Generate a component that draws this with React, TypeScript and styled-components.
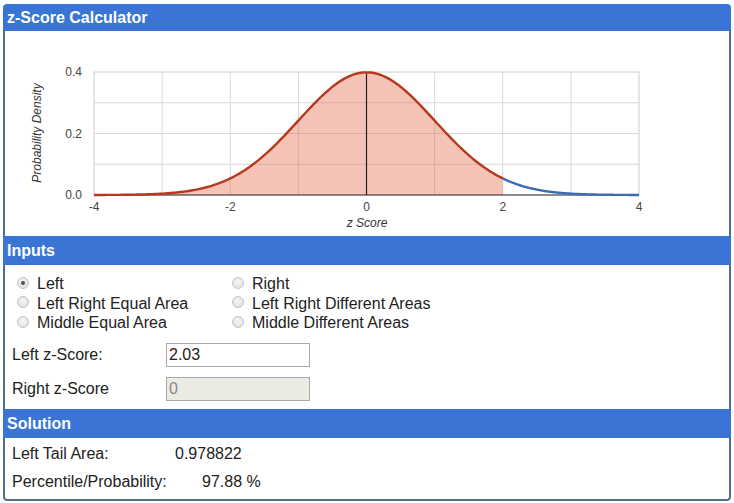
import React from "react";
import styled, { createGlobalStyle } from "styled-components";

const GlobalStyle = createGlobalStyle`
  html, body { margin: 0; padding: 0; background: #ffffff; }
  body { font-family: "Liberation Sans", Arial, sans-serif; color: #222; }
`;

const Page = styled.div`
  padding: 4px 3px 0 3px;
`;

const Panel = styled.div`
  width: 728px;
  box-sizing: border-box;
  border-radius: 4px;
  overflow: hidden;
`;

const Header = styled.div<{ $h: number }>`
  height: ${(p) => p.$h}px;
  line-height: ${(p) => p.$h}px;
  background: #3a75d6;
  color: #ffffff;
  font-weight: bold;
  font-size: 16px;
  padding-left: 4px;
`;

const Body = styled.div<{ $last?: boolean }>`
  border-left: 2px solid #4f6e8d;
  border-right: 2px solid #4f6e8d;
  border-bottom: ${(p) => (p.$last ? "2px solid #4f6e8d" : "none")};
  border-radius: ${(p) => (p.$last ? "0 0 4px 4px" : "0")};
  background: #ffffff;
`;

const ChartBody = styled(Body)`
  height: 205px;
`;

const InputsBody = styled(Body)`
  padding: 9px 0 8px 7px;
  font-size: 16px;
`;

const RadioGrid = styled.div`
  display: grid;
  grid-template-columns: 215px 1fr;
  grid-auto-rows: 19.5px;
  padding-left: 5px;
`;

const RadioItem = styled.label`
  display: flex;
  align-items: center;
  gap: 8px;
  line-height: 19.5px;
  color: #222;
`;

const RadioDot = styled.span<{ $on?: boolean }>`
  width: 10px;
  height: 10px;
  border-radius: 50%;
  border: 1px solid #c4c4c4;
  background: radial-gradient(circle at 50% 40%, #f6f6f6 0%, #dcdcdc 100%);
  display: inline-flex;
  align-items: center;
  justify-content: center;
  margin-top: -2px;
  &::after {
    content: "";
    width: 4px;
    height: 4px;
    border-radius: 50%;
    background: ${(p) => (p.$on ? "#505050" : "transparent")};
  }
`;

const FieldRow = styled.div`
  display: flex;
  align-items: center;
  margin-top: 10px;
`;

const FieldLabel = styled.span`
  width: 154px;
  line-height: 24px;
`;

const TextBox = styled.input`
  width: 144px;
  height: 24px;
  box-sizing: border-box;
  border: 1px solid #a9a9a9;
  padding: 0 2px;
  font-family: "Liberation Sans", Arial, sans-serif;
  font-size: 16px;
  color: #222;
  background: #ffffff;
  outline: none;
  &:disabled {
    background: #ebebe4;
    color: #8a8a8a;
  }
`;

const SolutionBody = styled(Body)`
  padding: 2px 0 3px 7px;
  font-size: 16px;
`;

const SolutionRow = styled.div`
  display: flex;
  height: 28px;
  line-height: 28px;
`;

const SolLabel = styled.span<{ $w: number }>`
  width: ${(p) => p.$w}px;
`;

const AxisText = styled.text`
  font-family: "Liberation Sans", Arial, sans-serif;
  font-size: 12px;
  fill: #444;
`;

const AxisTitle = styled(AxisText)`
  font-style: italic;
  fill: #333;
`;

const pdf = (z: number) => Math.exp(-0.5 * z * z) / Math.sqrt(2 * Math.PI);

const X0 = 89;
const X1 = 634;
const YB = 164;
const YT = 41;
const sx = (X1 - X0) / 8;
const sy = (YB - YT) / 0.4;
const px = (z: number) => X0 + (z + 4) * sx;
const py = (d: number) => YB - d * sy;

const curve = (a: number, b: number) => {
  const pts: string[] = [];
  const n = 160;
  for (let i = 0; i <= n; i++) {
    const z = a + ((b - a) * i) / n;
    pts.push(`${px(z).toFixed(2)},${py(pdf(z)).toFixed(2)}`);
  }
  return pts;
};

const Chart: React.FC<{ cut: number }> = ({ cut }) => {
  const left = curve(-4, cut);
  const right = curve(cut, 4);
  const fill = `M${px(-4)},${YB} L${left.join(" L")} L${px(cut)},${YB} Z`;
  const vlines = [-3, -2, -1, 1, 2, 3];
  const hlines = [0.1, 0.2, 0.3];
  return (
    <svg width={724} height={205} viewBox="0 0 724 205">
      <rect x={X0} y={YT} width={X1 - X0} height={YB - YT} fill="#fff" stroke="#cccccc" strokeWidth={1} />
      {vlines.map((v) => (
        <line key={v} x1={px(v)} x2={px(v)} y1={YT} y2={YB} stroke="#d9d9d9" strokeWidth={1} />
      ))}
      {hlines.map((h) => (
        <line key={h} x1={X0} x2={X1} y1={py(h)} y2={py(h)} stroke="#d9d9d9" strokeWidth={1} />
      ))}
      <path d={fill} fill="rgb(228,103,73)" fillOpacity={0.4} />
      <line x1={X0} x2={X1} y1={YB} y2={YB} stroke="#333" strokeWidth={1.2} />
      <line x1={px(0)} x2={px(0)} y1={py(pdf(0))} y2={YB} stroke="#222" strokeWidth={1.2} />
      <polyline points={left.join(" ")} fill="none" stroke="#b7381d" strokeWidth={2.4} />
      <polyline points={right.join(" ")} fill="none" stroke="#3a6db4" strokeWidth={2.4} />
      {[
        [0.4, "0.4"],
        [0.2, "0.2"],
        [0, "0.0"],
      ].map(([v, t]) => (
        <AxisText key={t as string} x={77} y={py(v as number) + 4} textAnchor="end">
          {t}
        </AxisText>
      ))}
      {[-4, -2, 0, 2, 4].map((v) => (
        <AxisText key={"x" + v} x={px(v)} y={180} textAnchor="middle">
          {v}
        </AxisText>
      ))}
      <AxisTitle x={362} y={196} textAnchor="middle">
        z Score
      </AxisTitle>
      <AxisTitle x={36} y={102} textAnchor="middle" transform="rotate(-90 36 102)">
        Probability Density
      </AxisTitle>
    </svg>
  );
};

const options = [
  ["Left", true],
  ["Right", false],
  ["Left Right Equal Area", false],
  ["Left Right Different Areas", false],
  ["Middle Equal Area", false],
  ["Middle Different Areas", false],
] as const;

export default function App() {
  return (
    <Page>
      <GlobalStyle />
      <Panel>
        <Header $h={27}>z-Score Calculator</Header>
        <ChartBody>
          <Chart cut={2.0} />
        </ChartBody>
        <Header $h={29}>Inputs</Header>
        <InputsBody>
          <RadioGrid>
            {options.map(([label, on]) => (
              <RadioItem key={label}>
                <RadioDot $on={on} />
                {label}
              </RadioItem>
            ))}
          </RadioGrid>
          <FieldRow>
            <FieldLabel>Left z-Score:</FieldLabel>
            <TextBox defaultValue="2.03" />
          </FieldRow>
          <FieldRow>
            <FieldLabel>Right z-Score</FieldLabel>
            <TextBox defaultValue="0" disabled />
          </FieldRow>
        </InputsBody>
        <Header $h={29}>Solution</Header>
        <SolutionBody $last>
          <SolutionRow>
            <SolLabel $w={163}>Left Tail Area:</SolLabel>
            <span>0.978822</span>
          </SolutionRow>
          <SolutionRow>
            <SolLabel $w={190}>Percentile/Probability:</SolLabel>
            <span>97.88 %</span>
          </SolutionRow>
        </SolutionBody>
      </Panel>
    </Page>
  );
}
